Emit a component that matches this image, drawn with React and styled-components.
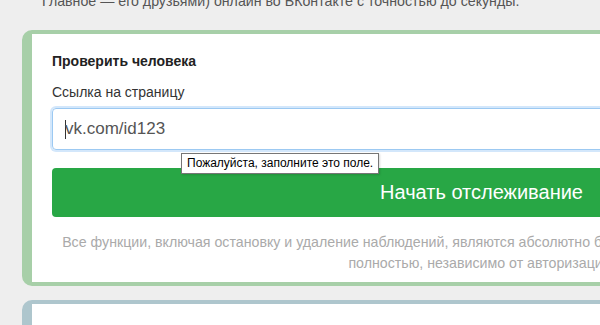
import React from 'react'
import styled, { createGlobalStyle } from 'styled-components'

const Global = createGlobalStyle`
  html, body {
    margin: 0;
    padding: 0;
    background: #eeeeee;
    overflow: hidden;
  }
  body {
    font-family: "Liberation Sans", Arial, sans-serif;
  }
`;

const Page = styled.div`
  width: 600px;
  height: 325px;
  overflow: hidden;
`;

const Intro = styled.p`
  margin: -9px 0 0 0;
  padding-left: 42px;
  font-size: 14.2px;
  line-height: 20px;
  color: #555;
  white-space: nowrap;
`;

const Card = styled.section`
  box-sizing: border-box;
  width: 913px;
  margin: ${props => props.top || "19"}px 0 0 22px;
  background: #fff;
  border: 4px solid ${props => props.border || "#a7cfa8"};
  border-left-width: 10px;
  border-radius: 10px;
  padding: ${props => props.padding || "18px 20px 8px 20px"};
`;

const Title = styled.h3`
  margin: 0 0 13px;
  font-size: 14px;
  line-height: 18px;
  font-weight: bold;
  color: #222;
`;

const Label = styled.label`
  display: block;
  margin-bottom: 7px;
  font-size: 14px;
  line-height: 18px;
  color: #333;
`;

const Field = styled.div`
  position: relative;
`;

const Input = styled.div`
  box-sizing: border-box;
  height: 42px;
  border: 1px solid #9cc9f2;
  box-shadow: 0 0 0 2px #d3e7fb;
  border-radius: 4px;
  padding: 0 12px;
  display: flex;
  align-items: center;
  font-size: 17px;
  color: #555;
`;

const Caret = styled.span`
  display: inline-block;
  width: 1px;
  height: 19px;
  background: #333;
  margin-right: -1px;
`;

const Tooltip = styled.div`
  position: absolute;
  left: 129px;
  top: 45px;
  z-index: 2;
  background: #fff;
  border: 1px solid #767676;
  box-shadow: 1px 1px 2px rgba(0,0,0,0.15);
  padding: 2px 5px 3px;
  font-size: 12px;
  line-height: 14px;
  color: #000;
  white-space: nowrap;
`;

const Button = styled.button`
  display: block;
  width: 100%;
  height: 49px;
  margin-top: 18px;
  border: none;
  border-radius: 4px;
  background: #28a745;
  color: #fff;
  font-family: inherit;
  font-size: 20px;
  cursor: pointer;
`;

const Note = styled.p`
  margin: 15px 0 0;
  text-align: center;
  font-size: 14.2px;
  line-height: 21px;
  color: #aaa;
`;

function App() {
  return (
    <Page>
      <Global />
      <Intro>Главное — его друзьями) онлайн во ВКонтакте с точностью до секунды.</Intro>
      <Card>
        <Title>Проверить человека</Title>
        <Label>Ссылка на страницу</Label>
        <Field>
          <Input><Caret />vk.com/id123</Input>
          <Tooltip>Пожалуйста, заполните это поле.</Tooltip>
        </Field>
        <Button>Начать отслеживание</Button>
        <Note>
          Все функции, включая остановку и удаление наблюдений, являются абсолютно бесплатными и доступны всем пользователям
          <br />
          полностью, независимо от авторизации.
        </Note>
      </Card>
      <Card top="14" border="#aec6cd" padding="34px 20px 40px 20px">
        <Title>Как это работает</Title>
      </Card>
    </Page>
  )
}

export default App
